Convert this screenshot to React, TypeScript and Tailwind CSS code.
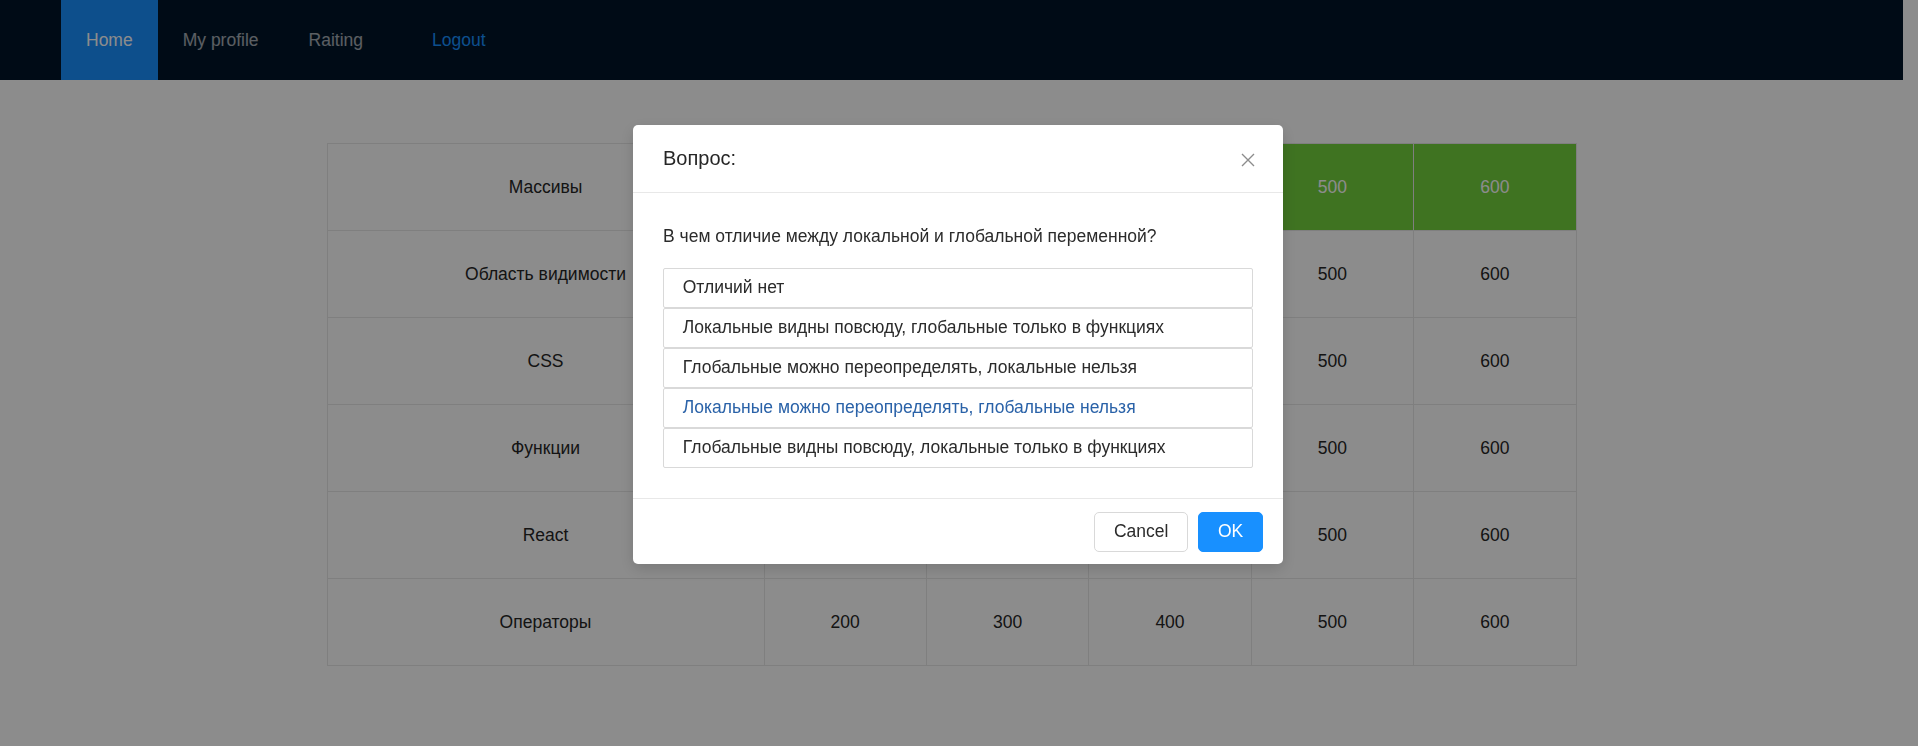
import React from 'react'

const values = [200, 300, 400, 500, 600]

const topics = [
  { title: 'Массивы', answered: true },
  { title: 'Область видимости', answered: false },
  { title: 'CSS', answered: false },
  { title: 'Функции', answered: false },
  { title: 'React', answered: false },
  { title: 'Операторы', answered: false },
]

const answers = [
  'Отличий нет',
  'Локальные видны повсюду, глобальные только в функциях',
  'Глобальные можно переопределять, локальные нельзя',
  'Локальные можно переопределять, глобальные нельзя',
  'Глобальные видны повсюду, локальные только в функциях',
]

function CloseIcon() {
  return (
    <svg width="14" height="14" viewBox="0 0 14 14" fill="none">
      <path d="M1 1L13 13M13 1L1 13" stroke="currentColor" strokeWidth="1.4" />
    </svg>
  )
}

export default function App() {
  return (
    <div className="relative min-h-screen w-[1903px] bg-white font-['Liberation_Sans',Arial,sans-serif] text-[17.5px]">
      {/* Header */}
      <header className="flex h-20 items-stretch bg-[#001529] pl-[61px]">
        <a className="flex items-center bg-[#1890ff] px-[25px] text-white">Home</a>
        <a className="flex items-center px-[25px] text-white/65">My profile</a>
        <a className="flex items-center px-[25px] text-white/65">Raiting</a>
        <a className="ml-[19px] flex items-center px-[25px] text-[#1890ff]">Logout</a>
      </header>

      {/* Board */}
      <main className="pt-[63px]">
        <table className="mx-auto w-[1250px] table-fixed border-collapse border border-[#e8e8e8] text-[#262626]">
          <colgroup>
            <col className="w-[437px]" />
            {values.map((v) => (
              <col key={v} />
            ))}
          </colgroup>
          <tbody>
            {topics.map((topic) => (
              <tr key={topic.title} className="h-[87px]">
                <td className="border border-[#e8e8e8] text-center">{topic.title}</td>
                {values.map((v) => (
                  <td
                    key={v}
                    className={
                      topic.answered
                        ? 'border border-[#e8e8e8] bg-[#73d13d] text-center text-white'
                        : 'border border-[#e8e8e8] text-center'
                    }
                  >
                    {v}
                  </td>
                ))}
              </tr>
            ))}
          </tbody>
        </table>
      </main>

      {/* Mask */}
      <div className="fixed inset-0 bg-black/45" />

      {/* Question modal */}
      <div className="fixed inset-0 flex justify-center pr-[2px] pt-[125px]">
        <div className="relative h-fit w-[650px] rounded-[5px] bg-white shadow-[0_5px_15px_rgba(0,0,0,0.15)]">
          <div className="border-b border-[#e8e8e8] px-[30px] py-5">
            <div className="text-[20px] leading-[27px] text-[#262626]">Вопрос:</div>
          </div>
          <button className="absolute right-0 top-0 flex h-[70px] w-[70px] items-center justify-center text-black/45">
            <CloseIcon />
          </button>

          <div className="p-[30px] text-[#2b2b2b]">
            <p className="mb-[19px] leading-[26px]">В чем отличие между локальной и глобальной переменной?</p>
            <div className="flex flex-col">
              {answers.map((answer, i) => (
                <button
                  key={answer}
                  className={
                    i === 3
                      ? 'h-10 rounded-[2px] border border-[#d9d9d9] bg-white px-[18.75px] pb-[2px] text-left text-[#2a62a8]'
                      : 'h-10 rounded-[2px] border border-[#d9d9d9] bg-white px-[18.75px] pb-[2px] text-left'
                  }
                >
                  {answer}
                </button>
              ))}
            </div>
          </div>

          <div className="flex justify-end gap-[10px] border-t border-[#e8e8e8] px-5 py-[12.5px]">
            <button className="h-10 rounded-[5px] border border-[#d9d9d9] bg-white px-[18.75px] text-[#2b2b2b]">
              Cancel
            </button>
            <button className="h-10 rounded-[5px] border border-[#1890ff] bg-[#1890ff] px-[18.75px] text-white">
              OK
            </button>
          </div>
        </div>
      </div>
    </div>
  )
}
